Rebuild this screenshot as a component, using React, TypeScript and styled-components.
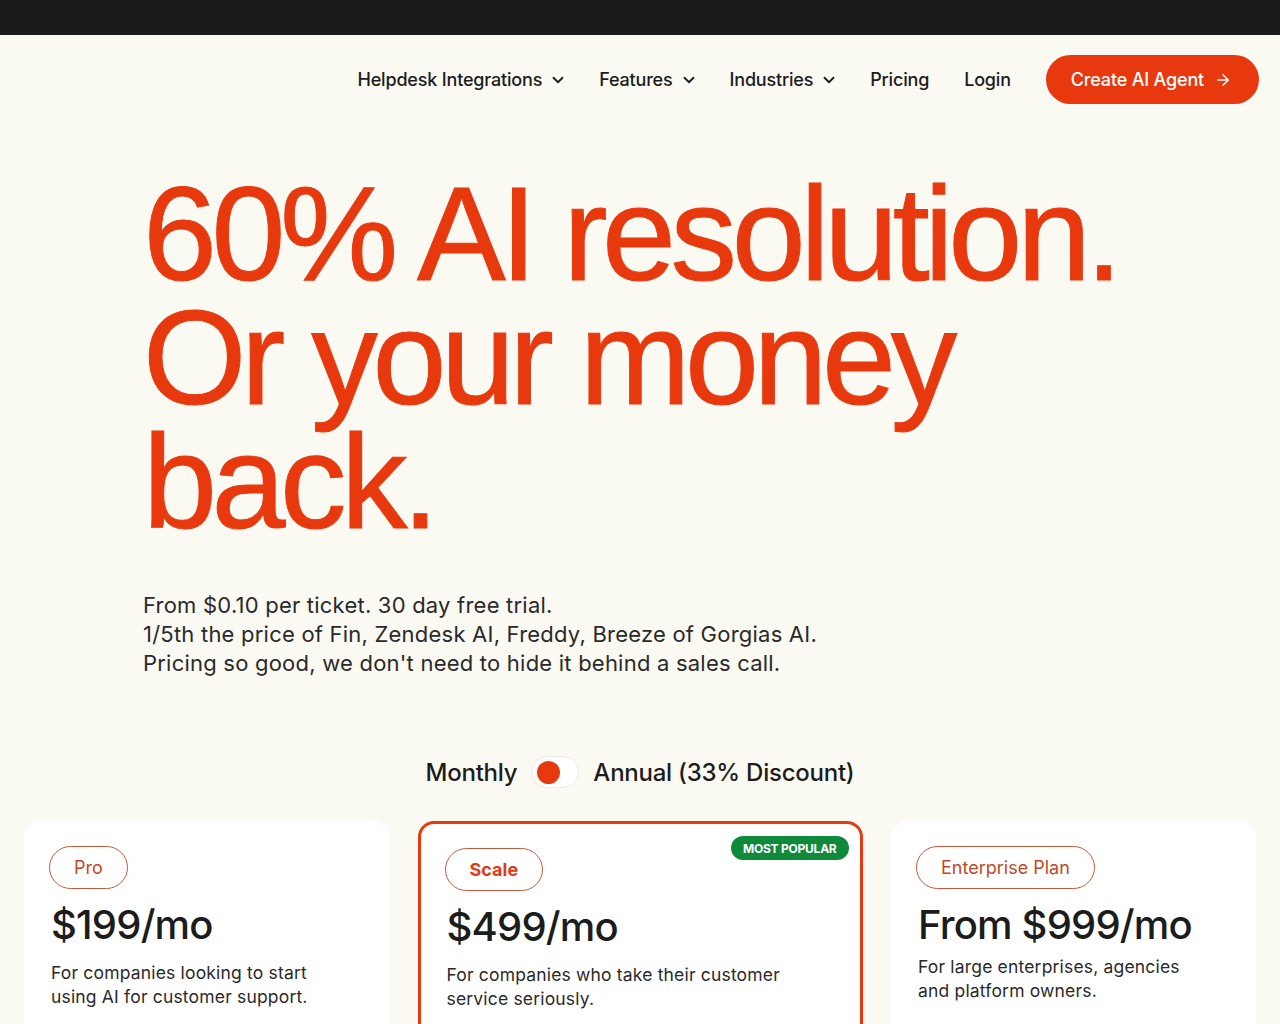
import React from "react";
import styled, {createGlobalStyle} from "styled-components";
import {ChevronDown, ArrowRight} from "lucide-react";

const RED = "#e8390e";

const GlobalStyle = createGlobalStyle`
  body {
    margin: 0;
    background: #faf9f2;
    font-family: Inter, "Noto Sans", sans-serif;
    color: #1c1c1c;
  }
`;

const TopBar = styled.div`
  height: 35px;
  background: #1b1b1b;
`;

const Nav = styled.nav`
  display: flex;
  justify-content: flex-end;
  align-items: center;
  gap: 35px;
  padding: 20px 21px 20px 0;
`;

const NavLink = styled.a`
  display: flex;
  align-items: center;
  gap: 7px;
  font-size: 18px;
  font-weight: 500;
  color: #1c1c1c;
  text-decoration: none;
  letter-spacing: -0.01em;

  svg {
    margin-right: -3px;
  }
`;

const CtaButton = styled.a`
  display: flex;
  align-items: center;
  gap: 10px;
  height: 49px;
  padding: 0 27px 0 25px;
  border-radius: 999px;
  background: ${RED};
  color: #fff;
  font-size: 18px;
  font-weight: 500;
  letter-spacing: -0.01em;
  text-decoration: none;
`;

const Hero = styled.section`
  padding: 48px 0 0 143px;
`;

const Headline = styled.h1`
  margin: 0;
  font-family: "Liberation Sans", Arial, sans-serif;
  font-weight: 400;
  font-size: 133px;
  line-height: 124px;
  letter-spacing: -0.041em;
  color: ${RED};
  -webkit-text-stroke: 1px ${RED};
`;

const Sub = styled.p`
  margin: 47px 0 0;
  font-size: 22px;
  line-height: 29px;
  color: #2a2a2a;
  letter-spacing: 0.01em;
`;

const ToggleRow = styled.div`
  display: flex;
  justify-content: center;
  align-items: center;
  gap: 14px;
  margin-top: 78px;
  font-size: 24px;
  font-weight: 500;
  letter-spacing: -0.01em;
`;

const Switch = styled.div`
  width: 48px;
  height: 32px;
  box-sizing: border-box;
  border-radius: 999px;
  background: #fff;
  border: 1px solid #ecebe4;
  display: flex;
  align-items: center;
  padding-left: 5px;
`;

const Knob = styled.span`
  width: 23px;
  height: 23px;
  border-radius: 50%;
  background: ${RED};
`;

const Cards = styled.div`
  display: grid;
  grid-template-columns: 365px 445px 365px;
  justify-content: space-between;
  padding: 33px 24px 0;
`;

const Card = styled.div<{$featured?: boolean}>`
  position: relative;
  background: #fff;
  border-radius: 16px;
  border: ${p => (p.$featured ? `3px solid ${RED}` : "none")};
  padding: ${p => (p.$featured ? "24px 24px" : "25px 25px")};
  min-height: 260px;
`;

const Pill = styled.span<{$bold?: boolean}>`
  display: inline-flex;
  align-items: center;
  height: 43px;
  box-sizing: border-box;
  padding: 0 24px;
  border: 1px solid #c45a3c;
  border-radius: 999px;
  font-size: 18px;
  font-weight: ${p => (p.$bold ? 700 : 400)};
  color: ${p => (p.$bold ? "#dd3c17" : "#c1482a")};
`;

const Badge = styled.span`
  position: absolute;
  top: 12px;
  right: 11px;
  height: 24px;
  padding: 0 12px;
  display: flex;
  align-items: center;
  border-radius: 999px;
  background: #0f8a3a;
  color: #fff;
  font-size: 12px;
  font-weight: 700;
  letter-spacing: -0.02em;
`;

const Price = styled.div`
  margin-top: 12px;
  font-size: 40px;
  line-height: 48px;
  font-weight: 500;
  letter-spacing: -0.02em;
  color: #1c1c1c;
  padding-left: 2px;
`;

const Desc = styled.p<{$tight?: boolean; $wide?: boolean}>`
  margin: ${p => (p.$tight ? "6px" : "12px")} 0 0;
  padding-left: 2px;
  font-size: 17.5px;
  line-height: 24px;
  color: #2a2a2a;
  letter-spacing: 0.01em;
  max-width: ${p => (p.$wide ? "340px" : "265px")};
`;

const plans = [
    {name: "Pro", price: "$199/mo", desc: "For companies looking to start using AI for customer support."},
    {name: "Scale", price: "$499/mo", desc: "For companies who take their customer service seriously.", featured: true},
    {name: "Enterprise Plan", price: "From $999/mo", desc: "For large enterprises, agencies and platform owners.", tight: true},
];

const App = () => {
    return <>
        <GlobalStyle/>
        <TopBar/>
        <Nav>
            <NavLink href="#">Helpdesk Integrations <ChevronDown size={18} strokeWidth={2.4}/></NavLink>
            <NavLink href="#">Features <ChevronDown size={18} strokeWidth={2.4}/></NavLink>
            <NavLink href="#">Industries <ChevronDown size={18} strokeWidth={2.4}/></NavLink>
            <NavLink href="#">Pricing</NavLink>
            <NavLink href="#">Login</NavLink>
            <CtaButton href="#">Create AI Agent <ArrowRight size={18} strokeWidth={2}/></CtaButton>
        </Nav>
        <Hero>
            <Headline>60% AI resolution.<br/>Or your money<br/>back.</Headline>
            <Sub>
                From $0.10 per ticket. 30 day free trial.<br/>
                1/5th the price of Fin, Zendesk AI, Freddy, Breeze of Gorgias AI.<br/>
                Pricing so good, we don't need to hide it behind a sales call.
            </Sub>
        </Hero>
        <ToggleRow>
            <span>Monthly</span>
            <Switch><Knob/></Switch>
            <span>Annual (33% Discount)</span>
        </ToggleRow>
        <Cards>
            {plans.map(plan => (
                <Card key={plan.name} $featured={plan.featured}>
                    {plan.featured && <Badge>MOST POPULAR</Badge>}
                    <Pill $bold={plan.featured}>{plan.name}</Pill>
                    <Price>{plan.price}</Price>
                    <Desc $tight={plan.tight} $wide={plan.featured}>{plan.desc}</Desc>
                </Card>
            ))}
        </Cards>
    </>;
};

export default App;
